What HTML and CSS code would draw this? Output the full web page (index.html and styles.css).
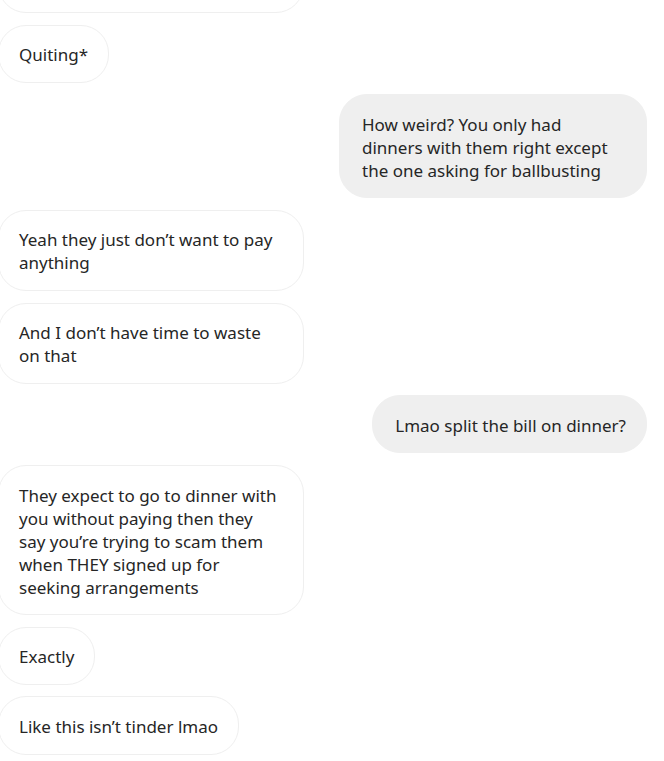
FILE: index.html
```html
<!DOCTYPE html>
<html lang="en">
<head>
<meta charset="utf-8">
<title>Chat</title>
<link rel="stylesheet" href="styles.css">
</head>
<body>
<main class="thread">
  <div class="msg in cut"></div>
  <div class="msg in">Quiting*</div>
  <div class="msg out wide">How weird? You only had<br>dinners with them right except<br>the one asking for ballbusting</div>
  <div class="msg in wide">Yeah they just don’t want to pay<br>anything</div>
  <div class="msg in wide">And I don’t have time to waste<br>on that</div>
  <div class="msg out">Lmao split the bill on dinner?</div>
  <div class="msg in wide">They expect to go to dinner with<br>you without paying then they<br>say you’re trying to scam them<br>when THEY signed up for<br>seeking arrangements</div>
  <div class="msg in">Exactly</div>
  <div class="msg in">Like this isn’t tinder lmao</div>
</main>
</body>
</html>
```
FILE: styles.css
```css
html, body {
  margin: 0;
  padding: 0;
  background: #ffffff;
}

.thread {
  display: flex;
  flex-direction: column;
  gap: 11.5px;
  padding: 0 17px 0 0;
  margin-top: -67px;
  font-family: "Noto Sans", "Open Sans", sans-serif;
  font-size: 17px;
  line-height: 23px;
  color: #262626;
}

.msg {
  box-sizing: border-box;
  max-width: 308px;
  padding: 17.6px 20px 15.6px;
  border: 1px solid #efefef;
  border-radius: 28px;
  white-space: nowrap;
}

.in {
  align-self: flex-start;
  margin-left: -2px;
  background: #ffffff;
}

.in.wide {
  width: 306px;
}

.out {
  align-self: flex-end;
  background: #efefef;
  padding-left: 22px;
}

.out.wide {
  width: 308px;
}

.cut {
  width: 306px;
  height: 80px;
}
```
